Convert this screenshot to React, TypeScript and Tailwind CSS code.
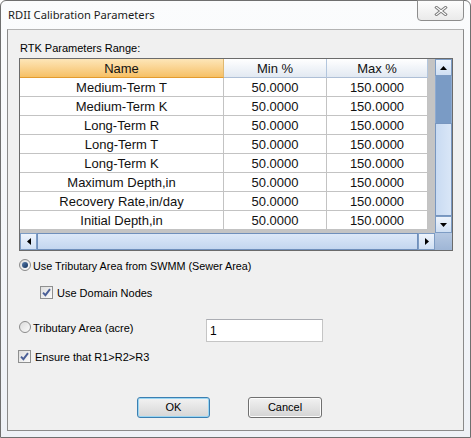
import React from 'react';

const rows = [
    'Medium-Term T',
    'Medium-Term K',
    'Long-Term R',
    'Long-Term T',
    'Long-Term K',
    'Maximum Depth,in',
    'Recovery Rate,in/day',
    'Initial Depth,in',
];

const Arrow: React.FC<{ dir: 'up' | 'down' | 'left' | 'right' }> = ({ dir }) => {
    const pts = {
        up: '0,4 7,4 3.5,0',
        down: '0,0 7,0 3.5,4',
        left: '4,0 4,7 0,3.5',
        right: '0,0 0,7 4,3.5',
    }[dir];
    const vertical = dir === 'up' || dir === 'down';
    return (
        <svg width={vertical ? 7 : 4} height={vertical ? 4 : 7} viewBox={vertical ? '0 0 7 4' : '0 0 4 7'}>
            <polygon points={pts} fill="#000" />
        </svg>
    );
};

const ScrollButton: React.FC<{ dir: 'up' | 'down' | 'left' | 'right' }> = ({ dir }) => (
    <div className="w-[17px] h-[17px] shrink-0 flex items-center justify-center border border-[#7d9cc4] bg-gradient-to-b from-[#eef4fc] to-[#cfdff3]">
        <Arrow dir={dir} />
    </div>
);

const Radio: React.FC<{ checked?: boolean }> = ({ checked }) => (
    <span className="w-[12px] h-[12px] shrink-0 rounded-full border border-[#8b8b8b] bg-gradient-to-br from-[#dcdcdc] to-[#fbfbfb] flex items-center justify-center">
        {checked && <span className="w-[6px] h-[6px] rounded-full bg-gradient-to-br from-[#5a7fae] to-[#12305a]" />}
    </span>
);

const Checkbox: React.FC = () => (
    <span className="w-[13px] h-[13px] shrink-0 border border-[#8e8f8f] bg-gradient-to-br from-[#dedede] to-[#fbfbfb] flex items-center justify-center">
        <svg width="9" height="9" viewBox="0 0 9 9">
            <path d="M1 4.6 L3.4 7.2 L8 1.2" stroke="#4a5f97" strokeWidth="1.9" fill="none" />
        </svg>
    </span>
);

export default function App() {
    return (
        <div className="w-[471px] h-[438px] bg-white font-['Liberation_Sans',Arial,sans-serif] text-black">
            <div className="relative w-[471px] h-[438px] rounded-t-[6px] border border-[#6f6f6f] bg-gradient-to-b from-[#fbfcfd] to-[#eef1f6] flex flex-col">
                <div className="h-[28px] pl-[7px] flex items-center font-['Noto_Sans',sans-serif] text-[11.2px] text-[#1b1b1b]">
                    RDII Calibration Parameters
                </div>
                <div className="absolute top-[-1px] right-[6px] w-[47px] h-[21px] rounded-b-[4px] border border-[#8d8d8d] bg-gradient-to-b from-[#fdfdfd] to-[#eaeaea] flex items-center justify-center">
                    <svg width="14" height="10" viewBox="0 0 14 10">
                        <path d="M2.5 1.5 L11.5 8.5 M11.5 1.5 L2.5 8.5" stroke="#7a7a7a" strokeWidth="3" strokeLinecap="square" />
                        <path d="M2.5 1.5 L11.5 8.5 M11.5 1.5 L2.5 8.5" stroke="#fff" strokeWidth="1.2" strokeLinecap="square" />
                    </svg>
                </div>

                <div className="mx-[6px] h-[402px] border border-[#8a8a8a] border-t-[#b3b3b3] bg-[#f0f0f0] flex flex-col text-[11px]">
                    <div className="mt-[12px] pl-[12px] leading-[13px]">RTK Parameters Range:</div>

                    <div className="mt-[3px] ml-[11px] w-[434px] h-[193px] border border-[#6b6b6b] bg-[#c4c4c4] flex flex-col">
                        <div className="flex h-[174px]">
                            <div className="w-[408px] flex flex-col text-[13px] leading-none text-[#111]">
                                <div className="flex h-[19px]">
                                    <div className="w-[204px] flex items-center justify-center border-r border-b border-r-[#e0b870] border-b-[#e39b2f] bg-gradient-to-b from-[#fde6b8] to-[#f6c064]">
                                        Name
                                    </div>
                                    <div className="w-[103px] flex items-center justify-center border-r border-b border-r-[#b3c6dd] border-b-[#aebfd6] bg-gradient-to-b from-[#ffffff] to-[#e2e9f2]">
                                        Min %
                                    </div>
                                    <div className="w-[101px] flex items-center justify-center border-r border-b border-r-[#b3c6dd] border-b-[#aebfd6] bg-gradient-to-b from-[#ffffff] to-[#e2e9f2]">
                                        Max %
                                    </div>
                                </div>
                                {rows.map(name => (
                                    <div key={name} className="flex h-[19px] bg-white">
                                        <div className="w-[204px] flex items-center justify-center border-r border-b border-[#c3c3c3]">{name}</div>
                                        <div className="w-[103px] flex items-center justify-center border-r border-b border-[#c3c3c3]">50.0000</div>
                                        <div className="w-[101px] flex items-center justify-center border-r border-b border-[#c3c3c3]">150.0000</div>
                                    </div>
                                ))}
                            </div>
                            <div className="w-[7px]" />
                            <div className="w-[17px] flex flex-col">
                                <ScrollButton dir="up" />
                                <div className="h-[47px] bg-[#7a9bc5] border-x border-[#8eaad0]" />
                                <div className="flex-1 border border-[#7896bf] bg-gradient-to-r from-[#c9dbf2] to-[#d9e6f7]" />
                                <ScrollButton dir="down" />
                            </div>
                        </div>
                        <div className="flex h-[17px]">
                            <div className="w-[415px] flex">
                                <ScrollButton dir="left" />
                                <div className="flex-1 border border-[#6f8fbb] bg-gradient-to-b from-[#dce8f8] to-[#c3d6ef]" />
                                <ScrollButton dir="right" />
                            </div>
                            <div className="w-[17px] bg-gradient-to-b from-[#b5c8e2] to-[#9fb6d6]" />
                        </div>
                    </div>

                    <div className="mt-[7px] ml-[11px] h-[13px] flex items-center">
                        <Radio checked />
                        <span className="ml-[2px] mt-[3px] leading-[13px] text-[10.8px]">Use Tributary Area from SWMM (Sewer Area)</span>
                    </div>

                    <div className="mt-[15px] ml-[32px] h-[13px] flex items-center">
                        <Checkbox />
                        <span className="ml-[4px] mt-[2px] leading-[13px]">Use Domain Nodes</span>
                    </div>

                    <div className="mt-[20px] ml-[11px] h-[23px] flex items-start">
                        <div className="mt-[1px] h-[13px] w-[187px] flex items-center">
                            <Radio />
                            <span className="ml-[2px] mt-[3px] leading-[13px]">Tributary Area (acre)</span>
                        </div>
                        <div className="w-[117px] h-[23px] border border-[#c5c5c5] border-t-[#abadb3] bg-white pl-[3px] flex items-center text-[12px]">
                            1
                        </div>
                    </div>

                    <div className="mt-[8px] ml-[10px] h-[13px] flex items-center">
                        <Checkbox />
                        <span className="ml-[4px] mt-[2px] leading-[13px]">Ensure that R1&gt;R2&gt;R3</span>
                    </div>

                    <div className="mt-[34px] ml-[129px] flex gap-[38px]">
                        <button className="w-[73px] h-[21px] rounded-[3px] border border-[#3c7fb1] shadow-[inset_0_0_0_1px_#9ad6f3] bg-gradient-to-b from-[#f2f2f2] to-[#d6d6d6] text-[11px] leading-none">
                            OK
                        </button>
                        <button className="w-[74px] h-[21px] rounded-[3px] border border-[#707070] shadow-[inset_0_0_0_1px_#fcfcfc] bg-gradient-to-b from-[#f2f2f2] to-[#d4d4d4] text-[11px] leading-none">
                            Cancel
                        </button>
                    </div>
                </div>
            </div>
        </div>
    );
}
